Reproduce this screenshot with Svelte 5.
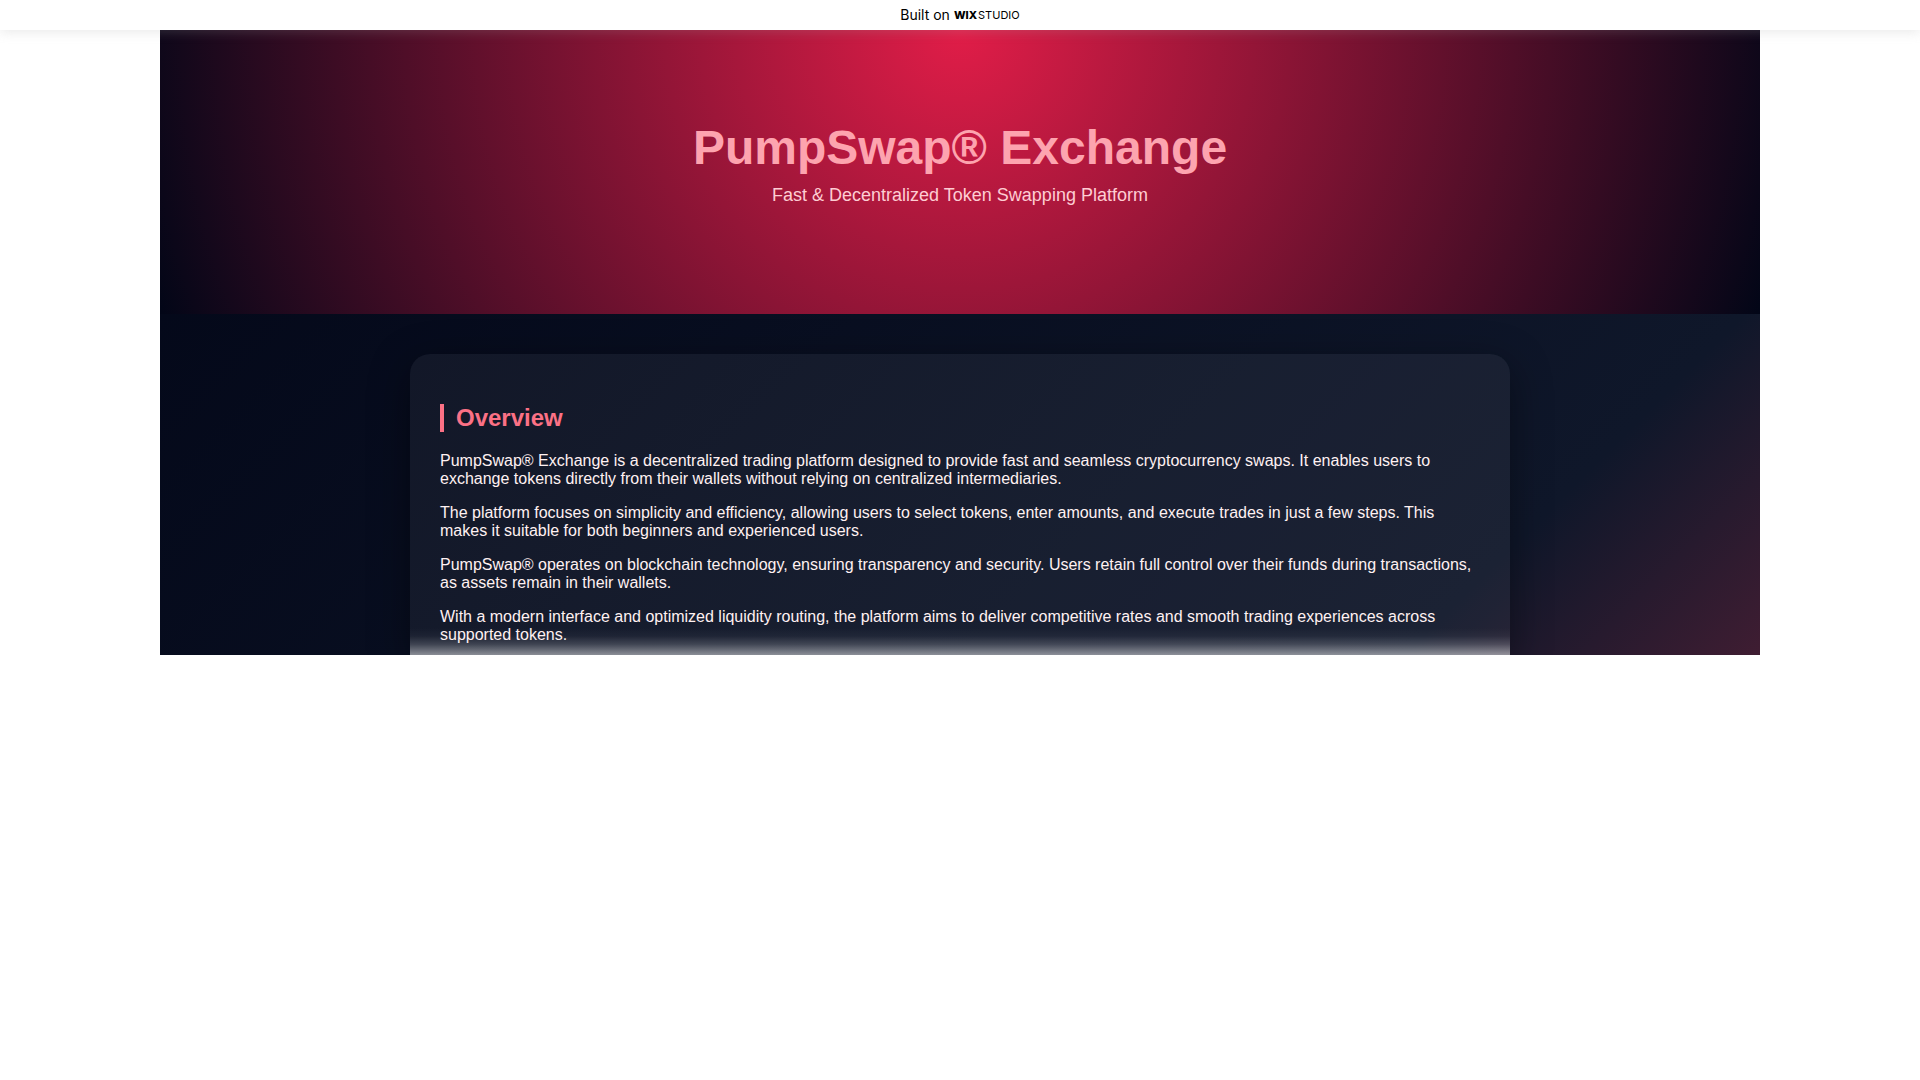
<script>
  const title = "PumpSwap® Exchange";
  const tagline = "Fast & Decentralized Token Swapping Platform";
  const overview = [
    "PumpSwap® Exchange is a decentralized trading platform designed to provide fast and seamless cryptocurrency swaps. It enables users to exchange tokens directly from their wallets without relying on centralized intermediaries.",
    "The platform focuses on simplicity and efficiency, allowing users to select tokens, enter amounts, and execute trades in just a few steps. This makes it suitable for both beginners and experienced users.",
    "PumpSwap® operates on blockchain technology, ensuring transparency and security. Users retain full control over their funds during transactions, as assets remain in their wallets.",
    "With a modern interface and optimized liquidity routing, the platform aims to deliver competitive rates and smooth trading experiences across supported tokens.",
  ];
</script>

<a class="banner" href="#studio">
  <span>Built on</span>
  <span class="brand"><b>WIX</b><span class="studio">STUDIO</span></span>
</a>

<div class="frame">
  <header>
    <h1>{title}</h1>
    <p>{tagline}</p>
  </header>
  <main>
    <section class="card">
      <h2>Overview</h2>
      {#each overview as text}
        <p>{text}</p>
      {/each}
    </section>
  </main>
</div>

<style>
  :global(body) {
    margin: 0;
    background: #fff;
    font-family: "Liberation Sans", Arial, sans-serif;
  }

  .banner {
    position: relative;
    z-index: 1;
    display: flex;
    align-items: center;
    justify-content: center;
    gap: 4px;
    height: 30px;
    background: #fff;
    box-shadow: 0 2px 12px rgba(162, 162, 162, 0.24);
    color: #000;
    font-family: Inter, sans-serif;
    font-size: 14px;
    line-height: 18px;
    text-decoration: none;
  }
  .brand {
    display: flex;
    gap: 1px;
    font-size: 11px;
  }
  .brand b {
    font-weight: 800;
  }
  .studio {
    font-weight: 400;
  }

  .frame {
    box-sizing: border-box;
    max-width: 1600px;
    margin: 0 auto;
    overflow: hidden;
    background: linear-gradient(135deg, #020617, #0f172a 84%, #3f1d32);
    color: #fff1f2;
  }

  header {
    padding: 90px 20px 108px;
    background: radial-gradient(circle at top, #e11d48, #020617);
    text-align: center;
  }
  h1 {
    margin: 0 0 9px;
    color: #fda4af;
    font-size: 48px;
    line-height: 56px;
  }
  header p {
    margin: 0;
    color: #fecdd3;
    font-size: 18px;
    line-height: 21px;
  }

  main {
    padding: 40px 20px 0;
  }
  .card {
    position: relative;
    z-index: 0;
    box-sizing: border-box;
    max-width: 1100px;
    margin: 0 auto;
    padding: 50px 30px 11px;
    border-radius: 20px 20px 0 0;
    background: rgba(255, 255, 255, 0.05);
    box-shadow: 0 10px 40px rgba(0, 0, 0, 0.4);
  }
  /* soft light edge where the card is cut off, kept under the text */
  .card::before {
    content: "";
    position: absolute;
    inset: auto 0 0;
    z-index: -1;
    height: 27px;
    background: linear-gradient(
      transparent,
      rgba(255, 255, 255, 0.04) 30%,
      rgba(255, 255, 255, 0.18) 60%,
      rgba(255, 255, 255, 0.5)
    );
  }
  h2 {
    margin: 0 0 20px;
    padding-left: 12px;
    border-left: 4px solid #fb7185;
    color: #fb7185;
    font-size: 24px;
    line-height: 28px;
  }
  .card p {
    margin: 0 0 16px;
    font-size: 16px;
    line-height: 18px;
  }
  .card p:last-child {
    margin-bottom: 0;
  }
</style>
